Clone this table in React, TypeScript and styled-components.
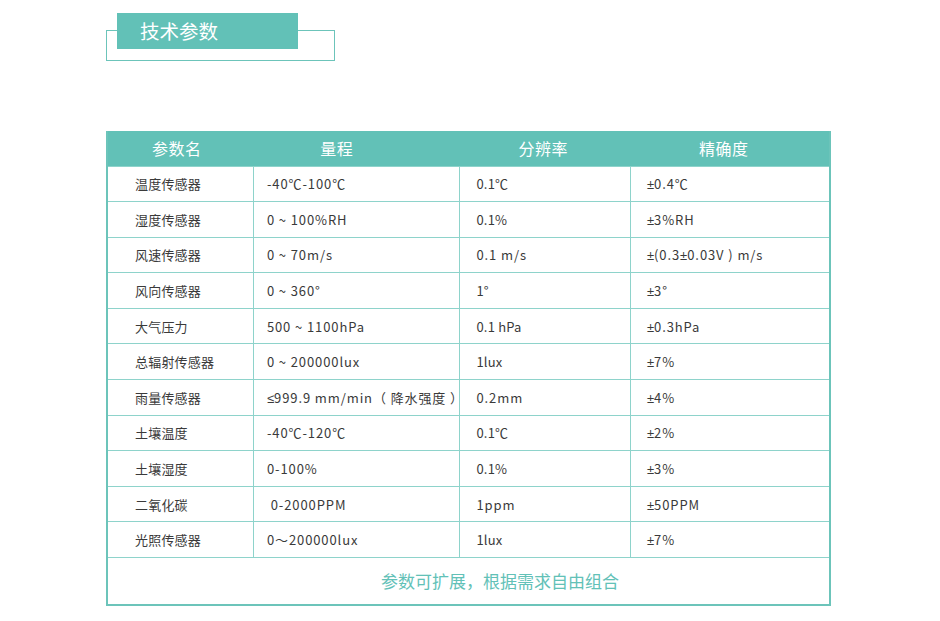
import React from "react";
import styled, { createGlobalStyle } from "styled-components";

const Global = createGlobalStyle`
  html, body { margin: 0; padding: 0; background: #fff; }
  body { font-family: "Noto Sans CJK SC", "Noto Sans", sans-serif; }
`;

const Page = styled.div`
  width: 940px;
  height: 621px;
  padding: 30px 0 0 106px;
  box-sizing: border-box;
  display: flex;
  flex-direction: column;
`;

const TitleFrame = styled.div`
  position: relative;
  width: 229px;
  height: 31px;
  border: 1px solid #6cc4ba;
  box-sizing: border-box;
`;

const TitleLabel = styled.div`
  position: absolute;
  left: 10px;
  top: -18px;
  width: 181px;
  height: 36px;
  background: #62c1b7;
  color: #fff;
  font-size: 19.5px;
  line-height: 36px;
  padding-left: 23px;
  box-sizing: border-box;
`;

const Table = styled.table`
  margin-top: 70px;
  width: 725px;
  border-collapse: collapse;
  table-layout: fixed;
  border: 2px solid #6cc4ba;
  border-top: none;
`;

const HeadRow = styled.tr`
  background: #62c1b7;
  height: 35px;
`;

const HeadCell = styled.th<{ $shift?: number }>`
  color: #fff;
  font-size: 16px;
  font-weight: 400;
  text-align: center;
  padding: 0 ${(p) => p.$shift ?? 0}px 0 0;
  letter-spacing: 0.5px;
`;

const Row = styled.tr`
  height: 35.6px;
  border-top: 1px solid #8ed3cb;
`;

const Cell = styled.td<{ $pad: number; $spaced?: boolean }>`
  padding: 0 4px 0 ${(p) => p.$pad}px;
  font-size: 13px;
  color: #3a3a3a;
  border-left: 1px solid #8ed3cb;
  white-space: pre;
  letter-spacing: ${(p) => (p.$spaced ? "0.9px" : "0.2px")};
  &:first-child { border-left: none; }
`;

const Sym = styled.span`
  font-family: "Liberation Sans", "DejaVu Sans", sans-serif;
  font-size: 13px;
  letter-spacing: 0;
`;

const FootRow = styled.tr`
  height: 47px;
  border-top: 1px solid #8ed3cb;
`;

const FootCell = styled.td`
  text-align: center;
  color: #62c1b7;
  font-size: 17px;
  padding-left: 64px;
  padding-bottom: 2px;
`;

const rows: [string, string, string, string][] = [
  ["温度传感器", "-40℃-100℃", "0.1℃", "±0.4℃"],
  ["湿度传感器", "0 ~ 100%RH", "0.1%", "±3%RH"],
  ["风速传感器", "0 ~ 70m/s", "0.1 m/s", "±(0.3±0.03V ) m/s"],
  ["风向传感器", "0 ~ 360°", "1°", "±3°"],
  ["大气压力", "500 ~ 1100hPa", "0.1 hPa", "±0.3hPa"],
  ["总辐射传感器", "0 ~ 200000lux", "1lux", "±7%"],
  ["雨量传感器", "≤999.9 mm/min（ 降水强度 ）", "0.2mm", "±4%"],
  ["土壤温度", "-40℃-120℃", "0.1℃", "±2%"],
  ["土壤湿度", "0-100%", "0.1%", "±3%"],
  ["二氧化碳", " 0-2000PPM", "1ppm", "±50PPM"],
  ["光照传感器", "0～200000lux", "1lux", "±7%"],
];

function Val({ text }: { text: string }) {
  const parts = text.split(/([±≤])/);
  return (
    <>
      {parts.map((p, i) =>
        p === "±" || p === "≤" ? <Sym key={i}>{p}</Sym> : <React.Fragment key={i}>{p}</React.Fragment>
      )}
    </>
  );
}

export default function App() {
  return (
    <>
      <Global />
      <Page>
        <TitleFrame>
          <TitleLabel>技术参数</TitleLabel>
        </TitleFrame>
        <Table>
          <colgroup>
            <col style={{ width: 146 }} />
            <col style={{ width: 206 }} />
            <col style={{ width: 170 }} />
            <col style={{ width: 199 }} />
          </colgroup>
          <thead>
            <HeadRow>
              <HeadCell $shift={8}>参数名</HeadCell>
              <HeadCell $shift={40}>量程</HeadCell>
              <HeadCell $shift={4}>分辨率</HeadCell>
              <HeadCell $shift={12}>精确度</HeadCell>
            </HeadRow>
          </thead>
          <tbody>
            {rows.map((r) => (
              <Row key={r[0]}>
                <Cell $pad={27}>{r[0]}</Cell>
                <Cell $pad={13} $spaced><Val text={r[1]} /></Cell>
                <Cell $pad={16} $spaced={r[2].includes("m")}><Val text={r[2]} /></Cell>
                <Cell $pad={16} $spaced><Val text={r[3]} /></Cell>
              </Row>
            ))}
            <FootRow>
              <FootCell colSpan={4}>参数可扩展，根据需求自由组合</FootCell>
            </FootRow>
          </tbody>
        </Table>
      </Page>
    </>
  );
}
